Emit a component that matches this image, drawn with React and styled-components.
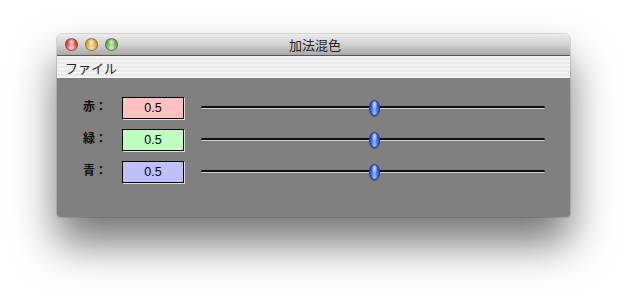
import React from "react";
import styled, { createGlobalStyle } from "styled-components";

const GlobalStyle = createGlobalStyle`
  html, body {
    margin: 0;
    padding: 0;
    background: #ffffff;
  }
  body {
    font-family: "Liberation Sans", "Noto Sans CJK JP", sans-serif;
  }
`;

const channels = [
  { label: "赤：", value: 0.5, tint: "#ffc0c0" },
  { label: "緑：", value: 0.5, tint: "#c0ffc0" },
  { label: "青：", value: 0.5, tint: "#c0c0ff" },
];

const App = () => {
  return (
    <>
      <GlobalStyle />
      <Page>
        <Window>
          <TitleBar>
            <Lights>
              <Light color="#e0443e" />
              <Light color="#e5a227" />
              <Light color="#5fb040" />
            </Lights>
            <Title>加法混色</Title>
          </TitleBar>
          <MenuBar>
            <MenuItem>ファイル</MenuItem>
          </MenuBar>
          <Content>
            {channels.map((c) => (
              <Row key={c.label}>
                <Label>{c.label}</Label>
                <Field tint={c.tint}>{c.value}</Field>
                <Slider>
                  <Track />
                  <Thumb style={{ left: `${c.value * 100}%` }} />
                </Slider>
              </Row>
            ))}
          </Content>
        </Window>
      </Page>
    </>
  );
};

export default App;

const Page = styled.div`
  padding: 34px 0 0 57px;
  width: 626px;
  height: 296px;
  box-sizing: border-box;
  overflow: hidden;
`;

const Window = styled.div`
  width: 513px;
  border-radius: 5px 5px 3px 3px;
  box-shadow: 0 26px 44px rgba(0, 0, 0, 0.55), 0 0 0 1px rgba(0, 0, 0, 0.12);
  overflow: hidden;
`;

const TitleBar = styled.div`
  position: relative;
  height: 21px;
  display: flex;
  align-items: center;
  justify-content: center;
  background: linear-gradient(#ececec, #d2d2d2 50%, #a9a9a9);
  border-bottom: 1px solid #575757;
`;

const Lights = styled.div`
  position: absolute;
  left: 8px;
  top: 4px;
  display: flex;
  gap: 7px;
`;

const Light = styled.div`
  width: 13px;
  height: 13px;
  border-radius: 50%;
  box-sizing: border-box;
  border: 1px solid rgba(0, 0, 0, 0.35);
  background: radial-gradient(circle at 50% 28%, rgba(255, 255, 255, 0.85) 0, rgba(255, 255, 255, 0) 40%),
    radial-gradient(circle at 50% 80%, rgba(255, 255, 255, 0.5), ${(p) => p.color} 55%);
`;

const Title = styled.div`
  font-family: "Noto Sans CJK JP", sans-serif;
  font-size: 13px;
  color: #222;
  margin-left: 3px;
`;

const MenuBar = styled.div`
  height: 22px;
  display: flex;
  align-items: center;
  padding-left: 8px;
  background: repeating-linear-gradient(#f4f4f4 0, #f4f4f4 2px, #e9e9e9 2px, #e9e9e9 4px);
`;

const MenuItem = styled.div`
  font-family: "Noto Sans CJK JP", sans-serif;
  font-size: 13px;
  color: #222;
`;

const Content = styled.div`
  background: #808080;
  height: 139px;
  box-sizing: border-box;
  padding: 19px 25px 0 26px;
  display: flex;
  flex-direction: column;
  gap: 10px;
`;

const Row = styled.div`
  display: flex;
  align-items: center;
  height: 22px;
`;

const Label = styled.div`
  width: 39px;
  font-family: "Noto Sans CJK JP", sans-serif;
  font-size: 12px;
  font-weight: bold;
  color: #111;
  margin-top: -5px;
`;

const Field = styled.div`
  width: 62px;
  height: 22px;
  box-sizing: border-box;
  border: 1px solid #000;
  box-shadow: 1px 1px 0 #e0e0e0;
  background: ${(p) => p.tint};
  font-size: 12.5px;
  color: #000;
  display: flex;
  align-items: center;
  justify-content: center;
`;

const Slider = styled.div`
  position: relative;
  flex: 1;
  margin-left: 17px;
  height: 22px;
  display: flex;
  align-items: center;
`;

const Track = styled.div`
  width: 100%;
  height: 0;
  border-top: 2px solid #111;
  border-bottom: 1px solid #d4d4d4;
  border-radius: 2px;
  margin-top: -1px;
`;

const Thumb = styled.div`
  position: absolute;
  top: 3px;
  width: 11px;
  height: 16px;
  margin-left: -4px;
  border-radius: 50%;
  box-sizing: border-box;
  border: 1px solid #2a3f8a;
  background: radial-gradient(ellipse at 50% 25%, #cfe0ff 0, rgba(120, 160, 255, 0) 45%),
    radial-gradient(ellipse at 50% 85%, #8fc0ff 0, #3a66d8 55%, #2246b0 100%);
  box-shadow: 0 1px 1px rgba(0, 0, 0, 0.35);
`;
